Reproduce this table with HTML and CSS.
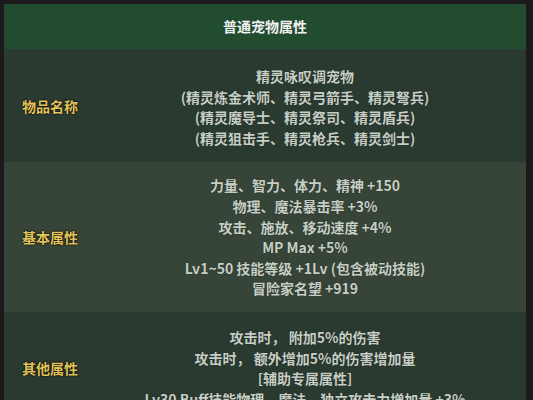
FILE: index.html
```html
<!DOCTYPE html>
<html lang="zh-CN">
<head>
<meta charset="utf-8">
<link rel="stylesheet" href="styles.css">
</head>
<body>
<div class="page">
  <table class="attr">
    <thead>
      <tr><th colspan="2" class="head">普通宠物属性</th></tr>
    </thead>
    <tbody>
      <tr class="r1">
        <td class="label">物品名称</td>
        <td class="value">精灵咏叹调宠物<br>(精灵炼金术师、精灵弓箭手、精灵弩兵)<br>(精灵魔导士、精灵祭司、精灵盾兵)<br>(精灵狙击手、精灵枪兵、精灵剑士)</td>
      </tr>
      <tr class="r2">
        <td class="label">基本属性</td>
        <td class="value">力量、智力、体力、精神 +150<br>物理、魔法暴击率 +3%<br>攻击、施放、移动速度 +4%<br>MP Max +5%<br>Lv1~50 技能等级 +1Lv (包含被动技能)<br>冒险家名望 +919</td>
      </tr>
      <tr class="r3">
        <td class="label">其他属性</td>
        <td class="value">攻击时， 附加5%的伤害<br>攻击时， 额外增加5%的伤害增加量<br>[辅助专属属性]<br>Lv30 Buff技能物理、魔法、独立攻击力增加量 +3%</td>
      </tr>
    </tbody>
  </table>
</div>
</body>
</html>
```
FILE: styles.css
```css
html, body {
  margin: 0;
  padding: 0;
  background: #1d1a1e;
  overflow: hidden;
}
.page {
  padding: 4px 7px 0 4px;
}
.attr {
  width: 522px;
  border-collapse: collapse;
  font-family: "Noto Sans CJK SC", "Noto Sans", sans-serif;
  font-size: 14px;
  font-weight: 700;
}
.head {
  background: #214c30;
  color: #f2f2f2;
  height: 45px;
  padding: 0;
  text-align: center;
  font-size: 14px;
  line-height: 45px;
}
td {
  padding: 0;
}
.r1 { background: #2a3a31; }
.r2 { background: #364538; }
.r3 { background: #2b3a30; }
.label {
  width: 62px;
  padding-left: 18px;
  color: #e3c45a;
  text-shadow: 0 0 2px #000, 0 0 1px #000;
  text-align: left;
  vertical-align: middle;
}
.value {
  color: #c6cec5;
  text-align: center;
  line-height: 20.6px;
  padding: 17px 0 14px 0;
  text-shadow: 0 0 1px rgba(0,0,0,0.5);
}
.r2 .value {
  padding: 13px 0 13px 0;
}
.r3 .value {
  padding: 15px 0 14px 0;
}
```
